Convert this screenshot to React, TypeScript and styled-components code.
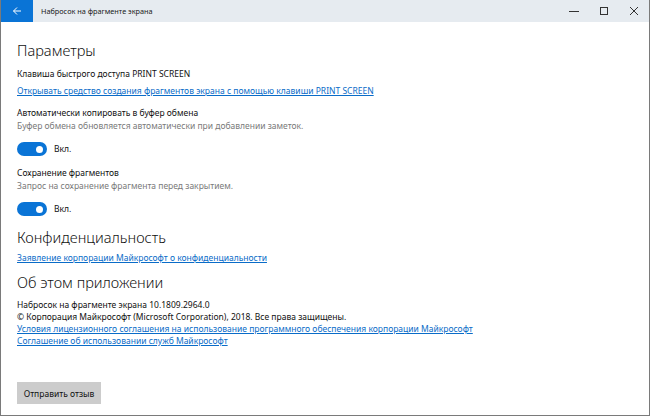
import React from "react";
import styled, { createGlobalStyle } from "styled-components";

const Global = createGlobalStyle`
  html, body { margin: 0; padding: 0; background: #fff; }
  body { font-family: "Noto Sans", "Open Sans", sans-serif; }
`;

const Window = styled.div`
  width: 650px;
  height: 416px;
  box-sizing: border-box;
  border: 1px solid #7a7a7a;
  border-top: none;
  display: flex;
  flex-direction: column;
  background: #fff;
  overflow: hidden;
`;

const TitleBar = styled.div`
  height: 22px;
  flex: none;
  display: flex;
  align-items: center;
  background: #e6ebf0;
`;

const BackButton = styled.div`
  width: 32px;
  height: 22px;
  background: #0a74d6;
  display: flex;
  align-items: center;
  justify-content: center;
  color: #fff;
`;

const Title = styled.div`
  flex: 1;
  padding-left: 8px;
  font-size: 7.3px;
  color: #1a1a1a;
`;

const Controls = styled.div`
  display: flex;
  height: 22px;
`;

const Ctrl = styled.div`
  width: 30px;
  display: flex;
  align-items: center;
  justify-content: center;
  color: #333;
`;

const Content = styled.div`
  flex: 1;
  padding: 16px 16px 0 16px;
  display: flex;
  flex-direction: column;
`;

const H = styled.div<{ $mt?: number }>`
  font-size: 14.6px;
  font-weight: 300;
  color: #111;
  line-height: 24px;
  margin-top: ${(p) => p.$mt ?? 0}px;
`;

const Text = styled.div<{ $mt?: number }>`
  font-size: 8.5px;
  line-height: 12px;
  color: #111;
  margin-top: ${(p) => p.$mt ?? 0}px;
`;

const Sub = styled(Text)`
  color: #7a7a7a;
`;

const Link = styled.a<{ $mt?: number }>`
  font-size: 8.5px;
  line-height: 12px;
  color: #0a6cc8;
  text-decoration: underline;
  margin-top: ${(p) => p.$mt ?? 0}px;
  align-self: flex-start;
`;

const ToggleRow = styled.div<{ $mt?: number }>`
  display: flex;
  align-items: center;
  gap: 7px;
  margin-top: ${(p) => p.$mt ?? 0}px;
`;

const Toggle = styled.div`
  width: 30px;
  height: 14px;
  border-radius: 7px;
  background: #0a74d6;
  position: relative;
  &::after {
    content: "";
    position: absolute;
    right: 4px;
    top: 3.5px;
    width: 7px;
    height: 7px;
    border-radius: 50%;
    background: #fff;
  }
`;

const Spacer = styled.div`
  flex: 1;
`;

const Button = styled.div`
  align-self: flex-start;
  background: #cccccc;
  color: #111;
  font-size: 8.5px;
  height: 22px;
  width: 84px;
  display: flex;
  align-items: center;
  justify-content: center;
  margin-bottom: 11px;
  box-sizing: border-box;
`;

export default function App() {
  return (
    <>
      <Global />
      <Window>
        <TitleBar>
          <BackButton>
            <svg width="10" height="10" viewBox="0 0 10 10">
              <path d="M9 5H1.5M5 1.5L1.5 5L5 8.5" stroke="#fff" strokeWidth="1" fill="none" />
            </svg>
          </BackButton>
          <Title>Набросок на фрагменте экрана</Title>
          <Controls>
            <Ctrl>
              <svg width="10" height="10" viewBox="0 0 10 10">
                <path d="M0 5.5H10" stroke="#333" strokeWidth="1" />
              </svg>
            </Ctrl>
            <Ctrl>
              <svg width="10" height="10" viewBox="0 0 10 10">
                <rect x="1.5" y="1.5" width="7" height="7" stroke="#333" strokeWidth="1" fill="none" />
              </svg>
            </Ctrl>
            <Ctrl>
              <svg width="10" height="10" viewBox="0 0 10 10">
                <path d="M1 1L9 9M9 1L1 9" stroke="#333" strokeWidth="1" />
              </svg>
            </Ctrl>
          </Controls>
        </TitleBar>
        <Content>
          <H>Параметры</H>
          <Text $mt={6}>Клавиша быстрого доступа PRINT SCREEN</Text>
          <Link $mt={5}>Открывать средство создания фрагментов экрана с помощью клавиши PRINT SCREEN</Link>
          <Text $mt={10}>Автоматически копировать в буфер обмена</Text>
          <Sub $mt={1}>Буфер обмена обновляется автоматически при добавлении заметок.</Sub>
          <ToggleRow $mt={10}>
            <Toggle />
            <Text>Вкл.</Text>
          </ToggleRow>
          <Text $mt={11}>Сохранение фрагментов</Text>
          <Sub $mt={1}>Запрос на сохранение фрагмента перед закрытием.</Sub>
          <ToggleRow $mt={10}>
            <Toggle />
            <Text>Вкл.</Text>
          </ToggleRow>
          <H $mt={9}>Конфиденциальность</H>
          <Link $mt={3}>Заявление корпорации Майкрософт о конфиденциальности</Link>
          <H $mt={6}>Об этом приложении</H>
          <Text $mt={5}>Набросок на фрагменте экрана 10.1809.2964.0</Text>
          <Text>© Корпорация Майкрософт (Microsoft Corporation), 2018. Все права защищены.</Text>
          <Link>Условия лицензионного соглашения на использование программного обеспечения корпорации Майкрософт</Link>
          <Link>Соглашение об использовании служб Майкрософт</Link>
          <Spacer />
          <Button>Отправить отзыв</Button>
        </Content>
      </Window>
    </>
  );
}
